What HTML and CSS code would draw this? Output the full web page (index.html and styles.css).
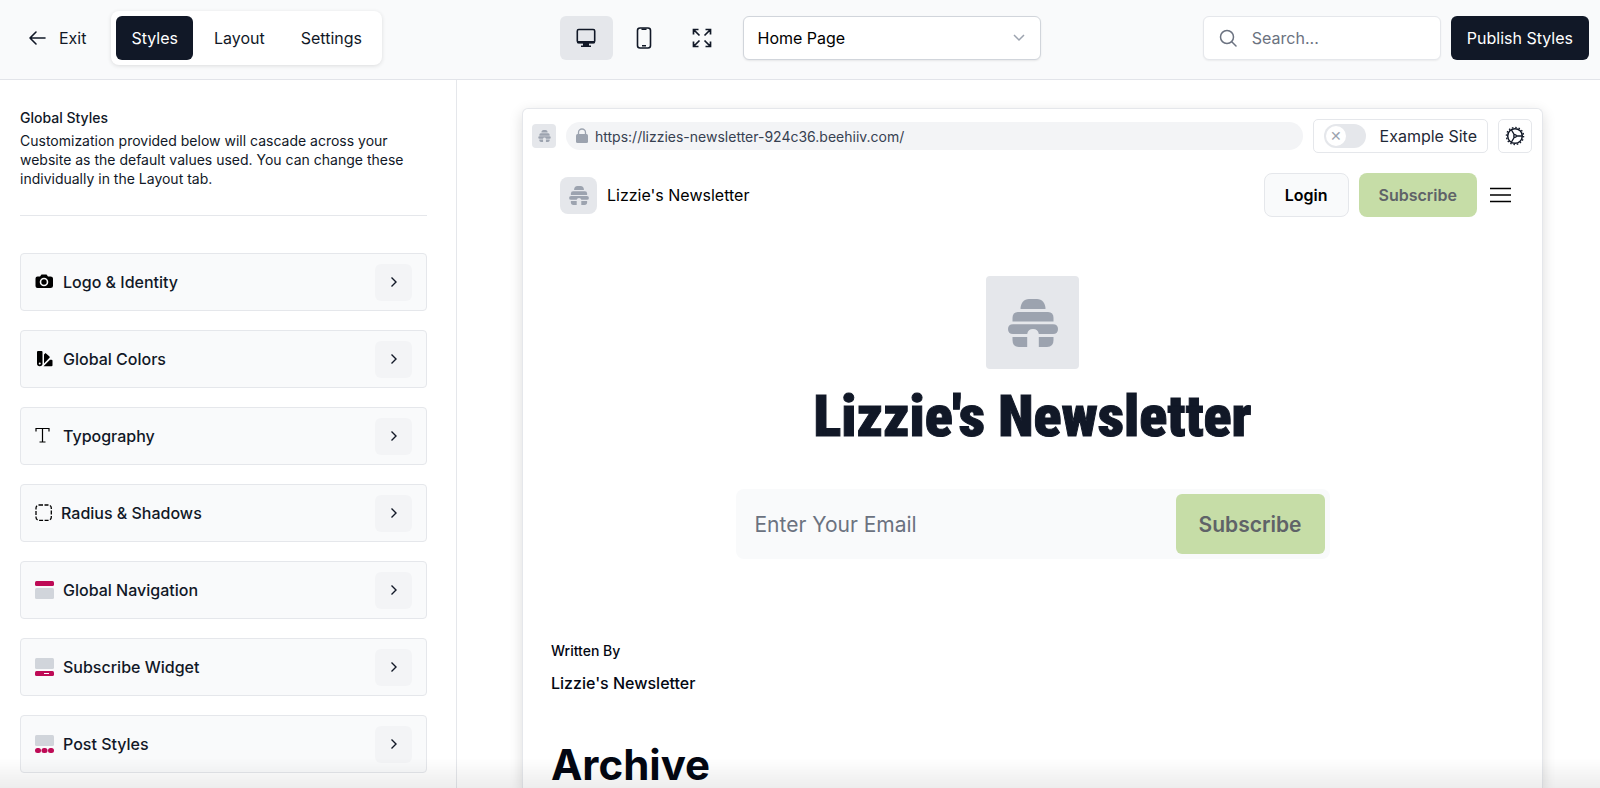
FILE: index.html
```html
<!DOCTYPE html>
<html lang="en">
<head>
    <meta charset="UTF-8">
    <meta name="viewport" content="width=device-width, initial-scale=1.0">
    <title>Website Builder</title>
    <link rel="stylesheet" href="styles.css">
</head>
<body>
    <!-- Shared beehive logo -->
    <svg class="sprite" aria-hidden="true">
        <symbol id="hive" viewBox="0 0 50 48">
            <path d="M12.500 10 C12.500 4 16 0 21 0 H29 C34 0 37.500 4 37.500 10 Z"/>
            <path d="M4.500 22.500 V19 Q4.500 13 10 13 H40 Q45.500 13 45.500 19 V22.500 Z"/>
            <path d="M5 25.300 H45 Q50 25.300 50 30 Q50 35 45 35 H30.800 Q30 30 25 30 Q20 30 19.200 35 H5 Q0 35 0 30 Q0 25.300 5 25.300 Z"/>
            <path d="M4.500 38 H19.200 V48 H11 Q4.500 48 4.500 41 Z"/>
            <path d="M45.500 38 H30.800 V48 H39 Q45.500 48 45.500 41 Z"/>
        </symbol>
        <symbol id="chevron" viewBox="0 0 20 20">
            <path d="M7.500 5.500 L12 10 L7.500 14.500" fill="none" stroke="currentColor" stroke-width="1.400"/>
        </symbol>
    </svg>

    <header class="topbar">
        <div class="topbar-left">
            <a class="exit" href="#">
                <svg width="18" height="18" viewBox="0 0 18 18" fill="none" stroke="currentColor" stroke-width="1.600" stroke-linecap="round" stroke-linejoin="round"><path d="M17 9H2M8 3L2 9l6 6"/></svg>
                Exit
            </a>
            <nav class="tabs">
                <button class="tab active">Styles</button>
                <button class="tab">Layout</button>
                <button class="tab">Settings</button>
            </nav>
        </div>

        <div class="topbar-center">
            <div class="devices">
                <button class="device active" aria-label="Desktop">
                    <svg width="22" height="22" viewBox="0 0 22 22"><rect x="2.300" y="2.500" width="17.400" height="13" rx="1.500" fill="none" stroke="currentColor" stroke-width="1.600"/><path d="M2 14h18v1.500q0 1-1 1h-5v2h2V20H6v-1.500h2v-2H3q-1 0-1-1z" fill="currentColor"/></svg>
                </button>
                <button class="device" aria-label="Mobile">
                    <svg width="22" height="22" viewBox="0 0 22 22" fill="none" stroke="currentColor" stroke-width="1.600"><rect x="4.500" y="1" width="13" height="20" rx="2.500"/><path d="M8.500 2.300h5M9 18.800h4" stroke-width="1.600"/></svg>
                </button>
                <button class="device" aria-label="Full screen">
                    <svg width="22" height="22" viewBox="0 0 22 22" fill="none" stroke="currentColor" stroke-width="1.700"><path d="M2.500 7.500v-5h5M2.500 2.500l6 6M14.500 2.500h5v5M19.500 2.500l-6 6M2.500 14.500v5h5M2.500 19.500l6-6M19.500 14.500v5h-5M19.500 19.500l-6-6"/></svg>
                </button>
            </div>
            <select class="page-select" aria-label="Page">
                <option>Home Page</option>
            </select>
        </div>

        <div class="topbar-right">
            <label class="search">
                <svg width="18" height="18" viewBox="0 0 18 18" fill="none" stroke="currentColor" stroke-width="1.500" stroke-linecap="round"><circle cx="8" cy="8" r="6.500"/><path d="M13 13l4 4"/></svg>
                <input type="search" placeholder="Search..." aria-label="Search">
            </label>
            <button class="publish">Publish Styles</button>
        </div>
    </header>

    <main class="workspace">
        <aside class="sidebar">
            <div class="intro">
                <h2>Global Styles</h2>
                <p>Customization provided below will cascade across your website as the default values used. You can change these individually in the Layout tab.</p>
            </div>

            <ul class="panels">
                <li><button class="panel">
                    <svg class="panel-icon" viewBox="0 0 19 19"><path fill-rule="evenodd" d="M2.500 3.500H5L6.500 1.500h5L13 3.500h2.500q2.500 0 2.500 2v7.500q0 2-2.500 2h-13q-2 0-2-2V5.500q0-2 2-2zM9 4.700a4.300 4.300 0 1 0 0 8.600a4.300 4.300 0 1 0 0-8.600zM9 6.300a2.700 2.700 0 1 1 0 5.400a2.700 2.700 0 1 1 0-5.400z"/></svg>
                    <span>Logo &amp; Identity</span>
                    <span class="open"><svg width="20" height="20"><use href="#chevron"/></svg></span>
                </button></li>
                <li><button class="panel">
                    <svg class="panel-icon" viewBox="0 0 19 19"><path fill-rule="evenodd" d="M3 1h3.500q1 0 1 1v11.500q0 2.700-2.750 2.700T2 13.500V2q0-1 1-1zM4.750 12.500a1 1 0 1 0 0 2a1 1 0 1 0 0-2z"/><path d="M9 4.500l1.500-1.500 4 3.500q.6.700 0 1.300L9 13.500zM8.500 16.200l6.500-6.500h1.500q1 0 1 1v4.500q0 1-1 1z"/></svg>
                    <span>Global Colors</span>
                    <span class="open"><svg width="20" height="20"><use href="#chevron"/></svg></span>
                </button></li>
                <li><button class="panel">
                    <svg class="panel-icon" viewBox="0 0 19 19" fill="none" stroke="#000" stroke-width="1.200"><path d="M1 4.500V1.500h13v3M7.500 1.500v13.500M4.500 15h6"/></svg>
                    <span>Typography</span>
                    <span class="open"><svg width="20" height="20"><use href="#chevron"/></svg></span>
                </button></li>
                <li><button class="panel">
                    <svg class="panel-icon dashed" viewBox="0 0 17 19" fill="none" stroke="#000" stroke-width="1.300"><rect x="1" y="1" width="15.300" height="15.300" rx="3" stroke-dasharray="4 1.500"/></svg>
                    <span>Radius &amp; Shadows</span>
                    <span class="open"><svg width="20" height="20"><use href="#chevron"/></svg></span>
                </button></li>
                <li><button class="panel">
                    <svg class="panel-icon" viewBox="0 0 19 19"><rect width="19" height="5" rx="1.500" fill="#be0b56"/><rect y="7" width="19" height="11" rx="1.500" fill="#d1d5db"/></svg>
                    <span>Global Navigation</span>
                    <span class="open"><svg width="20" height="20"><use href="#chevron"/></svg></span>
                </button></li>
                <li><button class="panel">
                    <svg class="panel-icon" viewBox="0 0 19 19"><rect width="19" height="11" rx="1.500" fill="#d1d5db"/><rect y="13" width="19" height="5" rx="1.500" fill="#be0b56"/><rect x="9" y="15" width="5" height="1" fill="#fff"/></svg>
                    <span>Subscribe Widget</span>
                    <span class="open"><svg width="20" height="20"><use href="#chevron"/></svg></span>
                </button></li>
                <li><button class="panel">
                    <svg class="panel-icon" viewBox="0 0 19 19"><rect width="19" height="11" rx="1.500" fill="#d1d5db"/><g fill="#be0b56"><rect y="13" width="6" height="5" rx="2.500"/><rect x="6.500" y="13" width="6" height="5" rx="2.500"/><rect x="13" y="13" width="6" height="5" rx="2.500"/></g></svg>
                    <span>Post Styles</span>
                    <span class="open"><svg width="20" height="20"><use href="#chevron"/></svg></span>
                </button></li>
            </ul>
        </aside>

        <section class="canvas">
            <div class="preview">
                <div class="browser-bar">
                    <span class="logo logo-small"><svg><use href="#hive"/></svg></span>
                    <div class="url">
                        <svg width="12" height="16" viewBox="0 0 12 16"><path d="M2.500 7V4.500a3.500 3.500 0 0 1 7 0V7" fill="none" stroke="#9ca3af" stroke-width="1.300"/><rect y="6" width="12" height="9" rx="1.500" fill="#9ca3af"/></svg>
                        https://lizzies-newsletter-924c36.beehiiv.com/
                    </div>
                    <label class="example">
                        <input type="checkbox" class="switch">
                        Example Site
                    </label>
                    <button class="gear" aria-label="Settings">
                        <svg width="20" height="20" viewBox="0 0 20 20" fill="none" stroke="currentColor"><circle cx="10" cy="10" r="7.300" stroke-width="1.500"/><circle cx="10" cy="10" r="8.600" stroke-width="1.300" stroke-dasharray="1.500 1.877"/><path d="M11 10h6M9.500 9.100L6.500 4M9.500 10.900L6.500 16" stroke-width="1.300"/><circle cx="10" cy="10" r="1.300" stroke-width="1.200"/></svg>
                    </button>
                </div>

                <div class="site-nav">
                    <a class="brand" href="#">
                        <span class="logo logo-medium"><svg><use href="#hive"/></svg></span>
                        Lizzie's Newsletter
                    </a>
                    <button class="login">Login</button>
                    <button class="subscribe">Subscribe</button>
                    <button class="menu" aria-label="Menu">
                        <svg width="21" height="16" viewBox="0 0 21 16" stroke="#000" stroke-width="1.600"><path d="M0 1.500h21M0 8h21M0 14.500h21"/></svg>
                    </button>
                </div>

                <div class="hero">
                    <span class="logo logo-large"><svg><use href="#hive"/></svg></span>
                    <h1>Lizzie's Newsletter</h1>
                    <form class="signup">
                        <input type="email" placeholder="Enter Your Email" aria-label="Email">
                        <button class="subscribe" type="button">Subscribe</button>
                    </form>
                </div>

                <div class="content">
                    <p class="written">Written By</p>
                    <p class="author">Lizzie's Newsletter</p>
                    <h2>Archive</h2>
                </div>
            </div>
        </section>
    </main>
    <div class="fade"></div>
</body>
</html>
```
FILE: styles.css
```css
* {
    box-sizing: border-box;
}

body {
    margin: 0;
    height: 100vh;
    display: flex;
    flex-direction: column;
    overflow: hidden;
    font-family: Inter, "Liberation Sans", sans-serif;
    font-size: 16px;
    color: #111827;
    background-color: #fff;
}

button, input, select {
    font: inherit;
    color: inherit;
}

button {
    padding: 0;
    border: none;
    background: none;
    cursor: pointer;
}

a {
    color: inherit;
    text-decoration: none;
}

h1, h2, p, ul {
    margin: 0;
    padding: 0;
}

ul {
    list-style: none;
}

svg {
    display: block;
    flex-shrink: 0;
}

.sprite {
    display: none;
}

/* Top bar */
.topbar {
    display: grid;
    grid-template-columns: 1fr auto 1fr;
    align-items: center;
    height: 80px;
    padding: 0 11px 3px;
    background-color: #f9fafb;
    border-bottom: 1px solid #e2e4e9;
    flex-shrink: 0;
}

.topbar-left, .topbar-center, .topbar-right, .devices, .exit, .tabs {
    display: flex;
    align-items: center;
}

.exit {
    gap: 13px;
    padding: 0 25px 0 17px;
}

.tabs {
    gap: 6px;
    padding: 5px;
    background-color: #fff;
    border-radius: 8px;
    box-shadow: 0 1px 4px rgba(0, 0, 0, 0.12);
}

.tab {
    height: 44px;
    padding: 0 15px;
    border-radius: 6px;
}

.tab.active, .publish {
    background-color: #111827;
    color: #fff;
}

.topbar-center {
    gap: 14px;
}

.devices {
    gap: 5px;
}

.device {
    display: grid;
    place-items: center;
    width: 53px;
    height: 44px;
    border-radius: 6px;
}

.device.active {
    background-color: #e5e7eb;
}

.page-select {
    width: 298px;
    height: 44px;
    padding: 0 14px;
    color: #000;
    border: 1px solid #d1d5db;
    border-radius: 6px;
    box-shadow: 0 1px 2px rgba(0, 0, 0, 0.08);
    appearance: none;
    background: #fff url("data:image/svg+xml,%3Csvg xmlns='http://www.w3.org/2000/svg' width='12' height='8' fill='none' stroke='%239ca3af' stroke-width='1.5'%3E%3Cpath d='M1 1l5 5 5-5'/%3E%3C/svg%3E") no-repeat right 15px center;
}

.topbar-right {
    justify-content: flex-end;
    gap: 10px;
}

.search {
    display: flex;
    align-items: center;
    gap: 15px;
    width: 238px;
    height: 44px;
    padding: 0 15px;
    color: #6b7280;
    background-color: #fff;
    border: 1px solid #e5e7eb;
    border-radius: 6px;
    box-shadow: 0 1px 2px rgba(0, 0, 0, 0.06);
}

.search input {
    flex: 1;
    min-width: 0;
    padding: 0;
    border: none;
    outline: none;
    background: none;
}

input::placeholder {
    color: #6b7280;
    opacity: 1;
}

.publish {
    height: 44px;
    padding: 0 16px;
    border-radius: 6px;
}

/* Sidebar */
.workspace {
    display: flex;
    flex: 1;
    min-height: 0;
}

.sidebar {
    width: 457px;
    flex-shrink: 0;
    padding: 28px 29px 0 20px;
    border-right: 1px solid #e5e7eb;
    overflow: hidden;
}

.intro {
    padding-bottom: 27px;
    margin-bottom: 37px;
    border-bottom: 1px solid #e5e7eb;
    font-size: 14px;
}

.intro h2 {
    font-size: 14px;
    font-weight: 500;
    line-height: 20px;
    margin-bottom: 3px;
}

.intro p {
    line-height: 19px;
}

.panels {
    display: grid;
    gap: 19px;
}

.panel {
    display: flex;
    align-items: center;
    gap: 9px;
    width: 100%;
    height: 58px;
    padding: 0 14px;
    font-weight: 500;
    text-align: left;
    background-color: #f9fafb;
    border: 1px solid #e5e7eb;
    border-radius: 4px;
}

.panel-icon {
    width: 19px;
    height: 19px;
}

.panel-icon.dashed {
    width: 17px;
}

.open {
    display: grid;
    place-items: center;
    width: 37px;
    height: 37px;
    margin-left: auto;
    background-color: #f3f4f6;
    border-radius: 6px;
}

/* Preview */
.canvas {
    flex: 1;
    min-width: 0;
    padding: 28px 57px 0 65px;
}

.preview {
    height: 100%;
    background-color: #fff;
    border: 1px solid #e5e7eb;
    border-bottom: none;
    border-radius: 6px 6px 0 0;
    box-shadow: 0 4px 14px rgba(0, 0, 0, 0.14);
}

.browser-bar {
    display: flex;
    align-items: center;
    gap: 10px;
    padding: 10px 10px 10px 9px;
}

.logo {
    display: grid;
    place-items: center;
    flex-shrink: 0;
    background-color: #e5e7eb;
    fill: #9ca3af;
}

.logo-small {
    width: 24px;
    height: 24px;
    border-radius: 4px;
}

.logo-small svg {
    width: 13px;
    height: 12px;
}

.logo-medium {
    width: 37px;
    height: 37px;
    border-radius: 8px;
}

.logo-medium svg {
    width: 20px;
    height: 19px;
}

.logo-large {
    width: 93px;
    height: 93px;
    border-radius: 4px;
}

.logo-large svg {
    width: 50px;
    height: 48px;
}

.url {
    display: flex;
    align-items: center;
    gap: 7px;
    flex: 1;
    height: 28px;
    padding: 0 10px;
    font-size: 14px;
    color: #374151;
    background-color: #f3f4f6;
    border-radius: 14px;
}

.example, .gear {
    display: flex;
    align-items: center;
    height: 34px;
    border: 1px solid #e5e7eb;
    border-radius: 5px;
}

.example {
    gap: 14px;
    padding: 0 10px;
    color: #1f2937;
}

.switch {
    display: flex;
    align-items: center;
    width: 42px;
    height: 24px;
    margin: 0;
    padding: 0 2px;
    appearance: none;
    background-color: #e5e7eb;
    border-radius: 12px;
}

.switch::before {
    content: "✕";
    width: 20px;
    height: 20px;
    font-size: 14px;
    line-height: 20px;
    text-align: center;
    color: #9ca3af;
    background-color: #fff;
    border-radius: 50%;
}

.gear {
    justify-content: center;
    width: 34px;
}

.site-nav {
    display: flex;
    align-items: center;
    gap: 10px;
    padding: 10px 31px 10px 37px;
}

.brand {
    display: flex;
    align-items: center;
    gap: 10px;
    margin-right: auto;
    color: #000;
}

.login, .subscribe {
    height: 44px;
    padding: 0 20px;
    font-weight: 600;
    border-radius: 8px;
}

.login {
    color: #000;
    background-color: #f9fafb;
    border: 1px solid #e5e7eb;
}

.subscribe {
    color: #5f6368;
    background-color: #c6dda7;
}

.menu {
    padding: 0 0 0 3px;
}

.hero {
    display: flex;
    flex-direction: column;
    align-items: center;
    padding-top: 49px;
}

.hero h1 {
    margin-top: 11px;
    font-family: "Roboto Condensed", Roboto, sans-serif;
    font-size: 58px;
    font-weight: 900;
    line-height: 72px;
    -webkit-text-stroke: 1px #111827;
}

.signup {
    display: flex;
    width: 594px;
    max-width: 100%;
    margin-top: 37px;
    padding: 5px;
    background-color: #f9fafb;
    border-radius: 8px;
    font-size: 21px;
}

.signup input {
    flex: 1;
    min-width: 0;
    padding: 0 14px;
    border: none;
    outline: none;
    background: none;
}

.signup .subscribe {
    height: 60px;
    padding: 0 23px;
    border-radius: 6px;
}

.content {
    padding: 80px 28px 0;
    color: #030712;
}

.written {
    font-size: 14px;
    font-weight: 500;
    line-height: 24px;
}

.author {
    margin-top: 8px;
    font-weight: 500;
    line-height: 24px;
}

.content h2 {
    margin-top: 48px;
    font-size: 42px;
    line-height: 44px;
}

/* Shade along the bottom of the window */
.fade {
    position: fixed;
    left: 0;
    right: 0;
    bottom: 0;
    height: 30px;
    background: linear-gradient(to bottom, rgba(0, 0, 0, 0), rgba(0, 0, 0, 0.07));
    pointer-events: none;
}
```
